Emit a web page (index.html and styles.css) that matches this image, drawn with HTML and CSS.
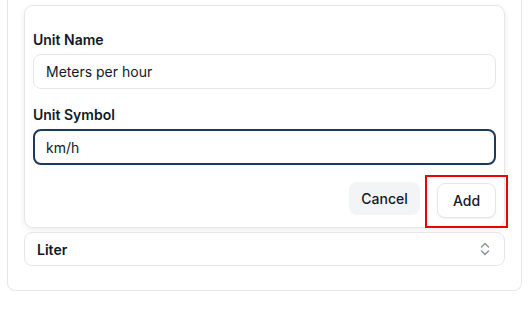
FILE: index.html
```html
<!DOCTYPE html>
<html>
<head>
<meta charset="utf-8">
<link rel="stylesheet" href="styles.css">
</head>
<body>
<div class="panel">
  <div class="card">
    <div class="field">
      <label class="label">Unit Name</label>
      <div class="input">Meters per hour</div>
    </div>
    <div class="field">
      <label class="label">Unit Symbol</label>
      <div class="input focused">km/h</div>
    </div>
    <div class="actions">
      <button class="btn cancel">Cancel</button>
      <div class="highlight">
        <button class="btn add">Add</button>
      </div>
    </div>
  </div>
  <div class="select">
    <span>Liter</span>
    <svg class="chev" width="12" height="16" viewBox="0 0 12 16" fill="none" stroke="#8a8f98" stroke-width="1.4" stroke-linecap="round" stroke-linejoin="round"><path d="M2.5 6 L6 2.5 L9.5 6"/><path d="M2.5 10 L6 13.5 L9.5 10"/></svg>
  </div>
</div>
</body>
</html>
```
FILE: styles.css
```css
* { box-sizing: border-box; }
html, body { margin: 0; padding: 0; background: #fff; }
body {
  font-family: Inter, "Noto Sans", sans-serif;
  color: #111827;
}
.panel {
  margin-left: 7px;
  width: 515px;
  border: 1px solid #e6e6e6;
  border-top: none;
  border-radius: 0 0 8px 8px;
  padding: 5px 16px 24px 16px;
}
.card {
  border: 1px solid #e5e7eb;
  border-radius: 9px;
  box-shadow: 0 2px 6px rgba(0,0,0,0.08);
  padding: 24px 8px 9px 8px;
  display: flex;
  flex-direction: column;
}
.field {
  display: flex;
  flex-direction: column;
  gap: 4px;
  margin-bottom: 16px;
}
.label {
  font-size: 14px;
  line-height: 20px;
  font-weight: 600;
}
.input {
  height: 35px;
  border: 1px solid #e5e7eb;
  border-radius: 8px;
  padding: 0 12px;
  display: flex;
  align-items: center;
  font-size: 14px;
  color: #111827;
}
.input.focused {
  border: 2px solid #1b3a5e;
  padding: 0 11px;
  height: 36px;
}
.field:nth-child(2) { margin-bottom: 17px; }
.actions {
  display: flex;
  justify-content: flex-end;
  align-items: flex-start;
  gap: 17px;
}
.btn {
  font-family: Inter, "Noto Sans", sans-serif;
  font-size: 14px;
  font-weight: 500;
  color: #111827;
  border-radius: 8px;
  cursor: pointer;
}
.cancel {
  background: #f3f4f6;
  border: none;
  height: 33px;
  width: 71px;
}
.highlight {
  position: relative;
  margin-top: 1px;
}
.highlight::after {
  content: "";
  position: absolute;
  left: -12px;
  top: -8px;
  right: -12px;
  bottom: -10px;
  border: 2px solid #ee0000;
  pointer-events: none;
}
.add {
  background: #fff;
  border: 1px solid #e5e7eb;
  box-shadow: 0 1px 2px rgba(0,0,0,0.06);
  height: 35px;
  width: 59px;
  display: block;
}
.select {
  margin-top: 4px;
  height: 34px;
  border: 1px solid #e5e7eb;
  border-radius: 8px;
  padding: 0 13px 0 12px;
  display: flex;
  align-items: center;
  justify-content: space-between;
  font-size: 14px;
  font-weight: 600;
}
.chev { display: block; }
```
